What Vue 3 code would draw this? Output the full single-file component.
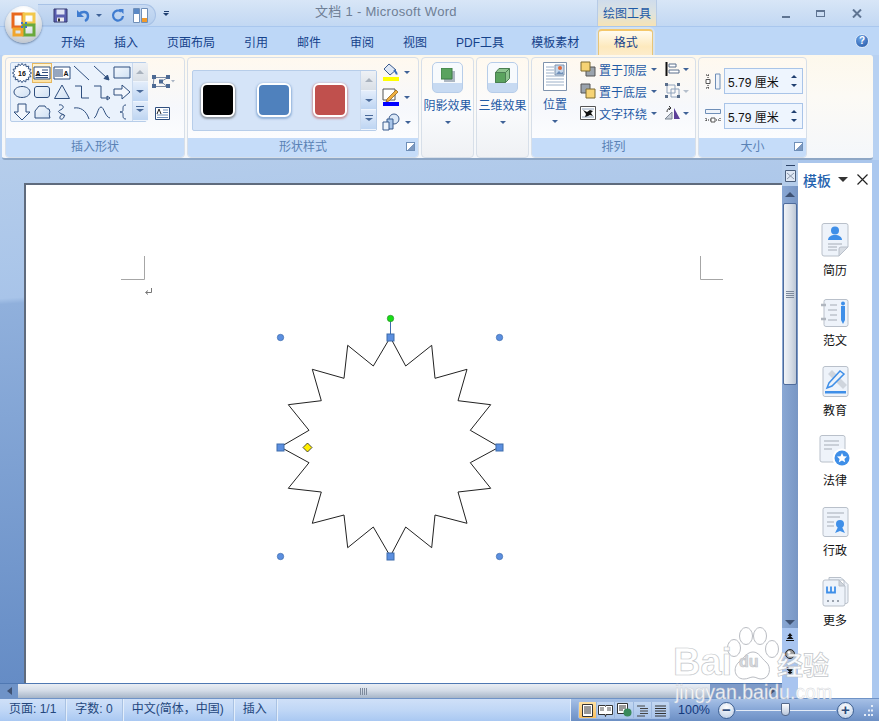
<script setup>
const tabs = ['开始', '插入', '页面布局', '引用', '邮件', '审阅', '视图', 'PDF工具', '模板素材']

// outline of the 16 point star, read off the reference in screen pixels
const starPoints = [
  [390.3, 337.3], [405.7, 366], [431.7, 345.3], [435, 378.3], [467, 369.3], [458, 400.7],
  [490.7, 404.7], [470.3, 430.3], [499.3, 447], [470.3, 462.7], [490.7, 488.3], [458, 492],
  [467, 523.3], [435, 515], [431.7, 547.7], [405.7, 527], [390.3, 556.3], [373.3, 527],
  [347.7, 547.7], [344, 515], [312.3, 523.3], [321.3, 492], [288.3, 488.3], [309, 462.7],
  [280.3, 447], [309, 430.3], [288.3, 404.7], [321.3, 400.7], [312.3, 369.3], [344, 378.3],
  [347.7, 345.3], [373.3, 366],
].map((p) => p.join(',')).join(' ')

const cornerHandles = [[280, 337], [499, 337], [280, 556], [499, 556]]
const sideHandles = [[390, 337], [280, 447], [499, 447], [390, 556]]

const burst = (() => {
  const pts = []
  for (let i = 0; i < 32; i++) {
    const r = i % 2 ? 7.6 : 9.6
    const a = (i * Math.PI) / 16
    pts.push(`${(10 + r * Math.sin(a)).toFixed(1)},${(10 - r * Math.cos(a)).toFixed(1)}`)
  }
  return 'M' + pts.join('L') + 'Z'
})()

const shapes = [
  { d: burst, fill: '#fff', label: '16' },
  { d: 'M2 4h16v12H2z M10 7h6 M10 9.5h6 M3.5 12.5h12.5 M3.5 14.5h12.5', fill: '#fff', label: 'A', active: true },
  { d: 'M2 4h16v12H2z M4 6v8 M6 6v8 M8 6v8 M10 6v8', fill: '#fff', label: 'A', labelX: 14 },
  { d: 'M2 3L17 17' },
  { d: 'M2 3L15 15 M17 17l-5-1.5 3.5-3.5z', fill: '#2f4f7f' },
  { d: 'M2 4h16v11H2z', fill: 'url(#shapeFill)' },
  { d: 'M10 4.5c4.5 0 8 2.5 8 5.5s-3.5 5.5-8 5.5S2 13 2 10s3.5-5.5 8-5.5z', fill: 'url(#shapeFill)' },
  { d: 'M5 4.5h10c1.5 0 2.5 1 2.5 2.5v6c0 1.5-1 2.5-2.5 2.5H5c-1.5 0-2.5-1-2.5-2.5V7c0-1.5 1-2.5 2.5-2.5z', fill: 'url(#shapeFill)' },
  { d: 'M10 3l7.5 13.5h-15z', fill: 'url(#shapeFill)' },
  { d: 'M3 4h6.5v12H17' },
  { d: 'M2 4h7v12h7 M18 16l-3-2v4z' },
  { d: 'M2 7h8V3l8 7-8 7v-4H2z', fill: '#f2f6fc' },
  { d: 'M6 2h8v8h4l-8 8-8-8h4z', fill: '#f2f6fc' },
  { d: 'M3 16V9l4-5h6c1 2 2 3 4 3l1 3c-1 1-1 3 0 6z', fill: 'url(#shapeFill)' },
  { d: 'M7 3c3-1 6 2 3 4S5 9 8 11s5 1 4 4-5 3-4 0 4-3 5-1' },
  { d: 'M2 6c6-1 12 2 15 11' },
  { d: 'M2 16c3-1 4-11 7-11s4 10 9 11' },
  { d: 'M14 3c-3 0-3 2-3 4s0 3-3 3c3 0 3 1 3 3s0 4 3 4' },
]
</script>

<template>
  <div class="word">
    <header class="titlebar">
      <div class="qat">
        <!-- save -->
        <svg class="qat-icon" width="15" height="15" viewBox="0 0 15 15">
          <path d="M1 1h13v13H1z" fill="#5a5fb0" stroke="#34386f" />
          <path d="M3.5 1.5h8v5h-8z" fill="#dfe4f5" />
          <path d="M4 9.5h7v4H4z" fill="#e9e9ee" />
          <path d="M5 10.5h2v3H5z" fill="#333" />
        </svg>
        <!-- undo -->
        <svg class="qat-icon undo" width="15" height="15" viewBox="0 0 15 15">
          <path d="M3 6c3-3 9-3 9 2 0 2-1 4-3 5" fill="none" stroke="#3f7cd0" stroke-width="2.4" />
          <path d="M1 2v7h7z" fill="#3f7cd0" />
        </svg>
        <span class="caret qat-caret"></span>
        <!-- repeat -->
        <svg class="qat-icon redo" width="14" height="15" viewBox="0 0 14 15">
          <path d="M10 3.5A5 5 0 1 0 12 8" fill="none" stroke="#3f7cd0" stroke-width="2.2" />
          <path d="M7.5 1l5 0v5z" fill="#3f7cd0" />
        </svg>
        <!-- page layout -->
        <svg class="qat-icon" width="15" height="15" viewBox="0 0 15 15">
          <path d="M.5.5h6v14h-6z" fill="#fff" stroke="#6f8fb8" />
          <path d="M1 1h5v5H1z" fill="#5a89c6" />
          <path d="M8.5.5h6v14h-6z" fill="#fff" stroke="#6f8fb8" />
          <path d="M9 10h5v4H9z" fill="#f09a2c" />
        </svg>
      </div>
      <div class="qat-more"><i></i><span class="caret"></span></div>
      <div class="doc-title">文档 1 - Microsoft Word</div>
      <div class="context-title">绘图工具</div>
      <div class="win-controls">
        <span class="win-min"></span>
        <span class="win-max"></span>
        <svg width="10" height="9" viewBox="0 0 10 9">
          <path d="M1 .5l8 8M9 .5l-8 8" stroke="#5f7492" stroke-width="2" />
        </svg>
      </div>
    </header>

    <nav class="tabs">
      <span v-for="tab in tabs" :key="tab" class="tab">{{ tab }}</span>
      <span class="tab-active">格式</span>
      <span class="help">?</span>
    </nav>

    <section class="ribbon">
      <div class="group g-insert">
        <div class="group-body insert-body">
          <svg class="svg-defs" width="0" height="0">
            <defs>
              <linearGradient id="shapeFill" x1="0" y1="0" x2="1" y2="1">
                <stop offset="0" stop-color="#f4f8fd" />
                <stop offset="1" stop-color="#cfe0f3" />
              </linearGradient>
            </defs>
          </svg>
          <div class="gallery shapes-gallery">
            <div class="shape-grid">
              <svg
                v-for="(shape, i) in shapes"
                :key="i"
                class="shape"
                :class="{ 'shape-active': shape.active }"
                width="20"
                height="20"
                viewBox="0 0 20 20"
              >
                <path :d="shape.d" :fill="shape.fill || 'none'" stroke="#2f4f7f" stroke-width="1" />
                <text
                  v-if="shape.label"
                  class="shape-label"
                  :x="shape.labelX || (shape.label === 'A' ? 6 : 10)"
                  y="13"
                  text-anchor="middle"
                >{{ shape.label }}</text>
              </svg>
            </div>
            <div class="gallery-scroll">
              <span class="scroll-btn disabled"><i class="up"></i></span>
              <span class="scroll-btn"><i class="down"></i></span>
              <span class="scroll-btn"><i class="more"></i></span>
            </div>
          </div>
          <div class="insert-side">
            <svg width="24" height="15" viewBox="0 0 24 15">
              <path d="M3 3.5h14l-7 4 6 5H2z" fill="none" stroke="#7d8ca5" />
              <path d="M1 1h4v4H1zM15 1h4v4h-4zM8 5.5h4v4H8zM1 10h4v4H1zM15 10h4v4h-4z" fill="#4d6a94" />
              <path d="M20 6h4l-2 2.5z" fill="#a9b4c4" />
            </svg>
            <svg width="15" height="13" viewBox="0 0 15 13">
              <path d="M.5.5h14v12H.5z" fill="#fff" stroke="#2f4f7f" />
              <path d="M8 3h5M8 5.5h5M2 8h11M2 10.5h11" stroke="#6f8fb8" />
              <path d="M2 7l2-5 2 5" fill="none" stroke="#222" />
            </svg>
          </div>
        </div>
        <div class="group-label">插入形状</div>
      </div>

      <div class="group g-style">
        <div class="group-body style-body">
          <div class="gallery style-gallery">
            <div class="swatches">
              <span class="swatch black"></span>
              <span class="swatch blue"></span>
              <span class="swatch red"></span>
            </div>
            <div class="gallery-scroll">
              <span class="scroll-btn disabled"><i class="up"></i></span>
              <span class="scroll-btn"><i class="down"></i></span>
              <span class="scroll-btn"><i class="more"></i></span>
            </div>
          </div>
          <div class="style-tools">
            <div class="style-tool">
              <svg width="17" height="18" viewBox="0 0 17 18">
                <path d="M7 1l7 6-6 5-6-6z" fill="#dfe8f5" stroke="#3b5c8e" />
                <path d="M12 7c2 2 3 3 2.5 4.5" fill="none" stroke="#3a6fc0" stroke-width="2" />
                <path d="M1 14h16v4H1z" fill="#ffff00" />
              </svg>
              <span class="caret"></span>
            </div>
            <div class="style-tool">
              <svg width="17" height="18" viewBox="0 0 17 18">
                <path d="M1 1h12v11H1z" fill="#fff" stroke="#555" />
                <path d="M5 11l9-9 2 2-9 9-3 1z" fill="#f0b040" stroke="#8a5a10" stroke-width=".7" />
                <path d="M1 14h16v4H1z" fill="#0000ff" />
              </svg>
              <span class="caret"></span>
            </div>
            <div class="style-tool">
              <svg width="18" height="18" viewBox="0 0 18 18">
                <circle cx="12" cy="6" r="5" fill="#dbe8f7" stroke="#3b5c8e" />
                <path d="M5 6h6v10H5z" fill="#a9c6ea" stroke="#3b5c8e" />
                <path d="M1 9h6v8H1z" fill="#eef4fb" stroke="#3b5c8e" />
              </svg>
              <span class="caret"></span>
            </div>
          </div>
        </div>
        <div class="group-label">
          形状样式
          <span class="launcher"></span>
        </div>
      </div>

      <div class="group g-effect">
        <div class="group-body effect-body">
          <span class="effect-btn">
            <svg width="14" height="14" viewBox="0 0 14 14">
              <path d="M3 3h11v11H3z" fill="#8d9aa8" opacity=".7" />
              <path d="M0 0h11v11H0z" fill="#5aa35e" stroke="#3c7a45" />
            </svg>
          </span>
          <span class="effect-text">阴影效果</span>
          <span class="caret"></span>
        </div>
      </div>

      <div class="group g-effect">
        <div class="group-body effect-body">
          <span class="effect-btn">
            <svg width="15" height="15" viewBox="0 0 15 15">
              <path d="M4 .5h10.5v10l-4 4H.5v-10z" fill="#8dc48f" stroke="#4a7f52" />
              <path d="M.5 4.5h10v10H.5z" fill="#5aa35e" stroke="#4a7f52" />
              <path d="M10.5 4.5l4-4" stroke="#4a7f52" />
            </svg>
          </span>
          <span class="effect-text">三维效果</span>
          <span class="caret"></span>
        </div>
      </div>

      <div class="group g-arrange">
        <div class="group-body arrange-body">
          <div class="position-btn">
            <svg width="24" height="29" viewBox="0 0 24 29">
              <path d="M.5.5h23v28H.5z" fill="#fff" stroke="#7f93ad" />
              <path d="M3 5h8M3 8h8M3 11h8M3 14h18M3 17h18M3 20h18M3 23h18" stroke="#9cb0c8" />
              <path d="M12 3h9v10h-9z" fill="#c6d8ec" stroke="#7f93ad" />
              <circle cx="17" cy="6" r="2" fill="#e2683a" />
              <path d="M13 12l3-3 2 2 2-1v2z" fill="#6f8fb8" />
            </svg>
            <span class="effect-text">位置</span>
            <span class="caret"></span>
          </div>
          <div class="arrange-rows">
            <div class="arrange-row">
              <svg width="16" height="16" viewBox="0 0 16 16">
                <path d="M6 6h9v9H6z" fill="#9aa3ad" stroke="#555" />
                <path d="M1 1h9v9H1z" fill="#f6d374" stroke="#7d6a30" />
              </svg>
              <span class="arrange-text">置于顶层</span>
              <span class="caret"></span>
            </div>
            <div class="arrange-row">
              <svg width="16" height="16" viewBox="0 0 16 16">
                <path d="M1 1h9v9H1z" fill="#9aa3ad" stroke="#555" />
                <path d="M6 6h9v9H6z" fill="#f6d374" stroke="#7d6a30" />
              </svg>
              <span class="arrange-text">置于底层</span>
              <span class="caret"></span>
            </div>
            <div class="arrange-row">
              <svg width="16" height="14" viewBox="0 0 16 14">
                <path d="M.5.5h15v13H.5z" fill="#fff" stroke="#555" />
                <path d="M2 3h12M2 11h12" stroke="#8fa2bb" />
                <path d="M3 4l4 2 3-2 3 1-2 2 2 3-3-1-2 1-3 1 1-3z" fill="#111" />
              </svg>
              <span class="arrange-text">文字环绕</span>
              <span class="caret"></span>
            </div>
          </div>
          <div class="arrange-tools">
            <div class="arrange-tool">
              <svg width="16" height="14" viewBox="0 0 16 14">
                <path d="M1.5 0v14" stroke="#111" stroke-width="2" />
                <path d="M4 2h7v3H4zM4 8h10v3H4z" fill="#fff" stroke="#5a6f8c" />
              </svg>
              <span class="caret"></span>
            </div>
            <div class="arrange-tool">
              <svg width="16" height="16" viewBox="0 0 16 16">
                <path d="M2 2h8v8H2zM6 6h8v8H6z" fill="none" stroke="#8fa2bb" />
                <path d="M0 0h3v3H0zM12 0h3v3h-3zM0 12h3v3H0zM12 12h3v3h-3z" fill="#5a6f8c" />
              </svg>
              <span class="caret muted"></span>
            </div>
            <div class="arrange-tool">
              <svg width="16" height="14" viewBox="0 0 16 14">
                <path d="M0 13l7-7v7z" fill="#c9cfd8" stroke="#7b8694" />
                <path d="M9 13V2l6 11z" fill="#5b3f98" />
                <path d="M2 6c0-2 1-4 4-4M4 0l2 2-2 2" fill="none" stroke="#333" />
              </svg>
              <span class="caret"></span>
            </div>
          </div>
        </div>
        <div class="group-label">排列</div>
      </div>

      <div class="group g-size">
        <div class="group-body size-body">
          <div class="size-row">
            <svg width="16" height="17" viewBox="0 0 16 17">
              <path d="M10.5 1h4.5v15h-4.5z" fill="#eef3fa" stroke="#6f8fb8" />
              <path d="M3 2v13M1 2h4M1 15h4" stroke="#222" stroke-dasharray="1 1" fill="none" />
              <path d="M1 6.5h4v4H1z" fill="#fff" stroke="#555" />
            </svg>
            <div class="size-input">
              <span>5.79 厘米</span>
              <span class="spinner"><i class="spin-up"></i><i class="spin-down"></i></span>
            </div>
          </div>
          <div class="size-row">
            <svg width="16" height="17" viewBox="0 0 16 17">
              <path d="M.5 1.5h15v4H.5z" fill="#eef3fa" stroke="#6f8fb8" />
              <path d="M1 12h14M1 10v4M15 10v4" stroke="#222" stroke-dasharray="1 1" fill="none" />
              <path d="M6 10h4v4H6z" fill="#fff" stroke="#555" />
            </svg>
            <div class="size-input">
              <span>5.79 厘米</span>
              <span class="spinner"><i class="spin-up"></i><i class="spin-down"></i></span>
            </div>
          </div>
        </div>
        <div class="group-label">
          大小
          <span class="launcher"></span>
        </div>
      </div>
    </section>

    <main class="workspace">
      <div class="doc-col">
        <div class="page-area">
          <div class="page">
            <svg class="page-canvas" width="756" height="498" viewBox="26 185 756 498">
              <path d="M144.5 256v23.5H121M700.5 256v23.5H723" fill="none" stroke="#a6a6a6" />
              <path d="M151.5 288v4.5H146M148 290.5l-2.5 2 2.5 2" fill="none" stroke="#777" />
              <polygon :points="starPoints" fill="#fff" stroke="#222" stroke-width="1" />
              <path d="M390.5 318v19" stroke="#3f6cab" />
              <circle cx="390.5" cy="318.5" r="3.2" fill="#16e016" stroke="#2c8a2c" stroke-width=".7" />
              <circle
                v-for="h in cornerHandles"
                :key="h.join()"
                :cx="h[0] + 0.5"
                :cy="h[1] + 0.5"
                r="3.2"
                fill="#5b8fe0"
                stroke="#3f6cab"
                stroke-width=".7"
              />
              <rect
                v-for="h in sideHandles"
                :key="h.join()"
                :x="h[0] - 3"
                :y="h[1] - 3"
                width="7"
                height="7"
                fill="#5b8fe0"
                stroke="#3f6cab"
                stroke-width="1"
              />
              <path d="M307.5 443l4.5 4.5-4.5 4.5-4.5-4.5z" fill="#ffee00" stroke="#222" stroke-width=".8" />
            </svg>
          </div>
        </div>
        <div class="hscroll">
          <span class="hscroll-left"><i></i></span>
          <span class="hscroll-thumb"><i></i></span>
          <span class="hscroll-right"><i></i></span>
        </div>
      </div>

      <div class="vscroll">
        <div class="vscroll-head">
          <i class="split-bar"></i>
          <svg width="11" height="12" viewBox="0 0 11 12">
            <path d="M.5.5h10v11H.5z" fill="#dfe8f5" stroke="#4b5f7c" />
            <path d="M2 3l7 6M9 3l-7 6" stroke="#8a97aa" />
          </svg>
        </div>
        <div class="vscroll-track">
          <i class="v-arrow-up"></i>
          <div class="vscroll-thumb"><i></i></div>
          <i class="v-arrow-down"></i>
        </div>
        <div class="browse">
          <svg width="8" height="8" viewBox="0 0 8 8"><path d="M4 0l2.5 3h-5zM4 2.5L7.5 6h-7zM0 7h8v1H0z" fill="#111" /></svg>
          <svg width="10" height="10" viewBox="0 0 10 10">
            <circle cx="5" cy="5" r="4.5" fill="#9a9a9a" stroke="#222" />
            <circle cx="4" cy="3.5" r="1.5" fill="#fff" />
          </svg>
          <svg width="8" height="8" viewBox="0 0 8 8"><path d="M0 0h8v1H0zM.5 2h7L4 5.5zM1.5 5h5L4 8z" fill="#111" /></svg>
        </div>
      </div>

      <aside class="side">
        <div class="side-head">
          <span class="side-title">模板</span>
          <i class="side-caret"></i>
          <svg width="11" height="11" viewBox="0 0 11 11"><path d="M.5.5l10 10M10.5.5l-10 10" stroke="#222" stroke-width="1.2" /></svg>
        </div>
        <div class="side-list">
          <div class="side-item">
            <svg width="28" height="34" viewBox="0 0 28 34">
              <path d="M3 .5h22a2 2 0 0 1 2 2V24l-9 9H3a2 2 0 0 1-2-2V2.5a2 2 0 0 1 2-2z" fill="#eef3fa" stroke="#b9c0ca" />
              <path d="M27 24h-7a2 2 0 0 0-2 2v7z" fill="#d8dde4" stroke="#b9c0ca" />
              <circle cx="14" cy="7.5" r="4" fill="#3f8fe8" />
              <path d="M7 17c0-3 3-5 7-5s7 2 7 5z" fill="#3f8fe8" />
              <path d="M7 21h14M7 24h9M7 27h9" stroke="#a5acb6" />
            </svg>
            <span>简历</span>
          </div>
          <div class="side-item">
            <svg width="28" height="28" viewBox="0 0 28 28">
              <path d="M5 .5h20a2 2 0 0 1 2 2v23a2 2 0 0 1-2 2H5a2 2 0 0 1-2-2v-23a2 2 0 0 1 2-2z" fill="#eef3fa" stroke="#b9c0ca" />
              <path d="M0 6h5M0 20h5" stroke="#b0b6bf" stroke-width="2.4" />
              <path d="M9 6h7M7 11h9M9 16h7M7 21h9" stroke="#a5acb6" />
              <path d="M20 7h4v14l-2 4-2-4z" fill="#3f8fe8" />
              <circle cx="22" cy="4.5" r="2" fill="#3f8fe8" />
            </svg>
            <span>范文</span>
          </div>
          <div class="side-item">
            <svg width="27" height="31" viewBox="0 0 27 31">
              <path d="M3 .5h21a2 2 0 0 1 2 2v26a2 2 0 0 1-2 2H3a2 2 0 0 1-2-2v-26a2 2 0 0 1 2-2z" fill="#eef3fa" stroke="#b9c0ca" />
              <path d="M6 8l4-4 15 15-4 4z" fill="#cfd5dd" />
              <path d="M5 22l2-5L18 5l4 3L10 20z" fill="#eef3fa" stroke="#3f8fe8" stroke-width="1.5" />
              <path d="M3 25h21v2.5H3z" fill="#3f8fe8" />
            </svg>
            <span>教育</span>
          </div>
          <div class="side-item">
            <svg width="32" height="32" viewBox="0 0 32 32">
              <path d="M3 .5h21a2 2 0 0 1 2 2V27H3a2 2 0 0 1-2-2V2.5a2 2 0 0 1 2-2z" fill="#eef3fa" stroke="#b9c0ca" />
              <path d="M5 6h15M5 10h15M5 14h8" stroke="#a5acb6" />
              <circle cx="23" cy="23" r="9.5" fill="#fff" />
              <circle cx="23" cy="23" r="7.5" fill="#3f8fe8" />
              <path d="M23 18l1.5 3.2 3.5.4-2.6 2.3.8 3.4-3.2-1.8-3.2 1.8.8-3.4-2.6-2.3 3.5-.4z" fill="#fff" />
            </svg>
            <span>法律</span>
          </div>
          <div class="side-item">
            <svg width="27" height="30" viewBox="0 0 27 30">
              <path d="M3 .5h21a2 2 0 0 1 2 2v25a2 2 0 0 1-2 2H3a2 2 0 0 1-2-2v-25a2 2 0 0 1 2-2z" fill="#eef3fa" stroke="#b9c0ca" />
              <path d="M5 6h17M5 10h13M5 15h7M5 19h7" stroke="#a5acb6" />
              <circle cx="18" cy="17" r="4" fill="#3f8fe8" />
              <path d="M16 20l-3 6 5-2 5 2-3-6z" fill="#3f8fe8" />
            </svg>
            <span>行政</span>
          </div>
          <div class="side-item">
            <svg width="27" height="30" viewBox="0 0 27 30">
              <path d="M7 .5h12l7 7v17a2 2 0 0 1-2 2h-2V3H7z" fill="#eef3fa" stroke="#b9c0ca" />
              <path d="M3 3h14l6 6v18a2 2 0 0 1-2 2H3a2 2 0 0 1-2-2V5a2 2 0 0 1 2-2z" fill="#eef3fa" stroke="#b9c0ca" />
              <path d="M17 3v6h6z" fill="#d0d5dc" stroke="#b9c0ca" />
              <path d="M5 9.5v6h8v-6M9 9.5v6" fill="none" stroke="#3f8fe8" stroke-width="1.8" />
              <path d="M5 23h2v2H5zM10 23h2v2h-2zM15 23h2v2h-2z" fill="#9aa2ad" />
            </svg>
            <span>更多</span>
          </div>
        </div>
      </aside>
      <div class="right-edge"></div>
    </main>

    <footer class="status">
      <div class="status-left">
        <span class="status-cell">页面: 1/1</span>
        <span class="status-cell">字数: 0</span>
        <span class="status-cell">中文(简体，中国)</span>
        <span class="status-cell">插入</span>
      </div>
      <div class="status-right">
        <div class="views">
          <span class="view view-active">
            <svg width="13" height="13" viewBox="0 0 13 13"><path d="M1.5.5h10v12h-10z" fill="#fff" stroke="#333" /><path d="M3 3h7M3 5h7M3 7h7M3 9h7" stroke="#333" /></svg>
          </span>
          <span class="view">
            <svg width="15" height="13" viewBox="0 0 15 13"><path d="M.5 1.5h6.5l.5 1 .5-1h6.500v9H8l-.5 2-.5-2H.5z" fill="#fff" stroke="#333" /><path d="M2 4h4M2 6h4M9 4h4M9 6h4" stroke="#555" /></svg>
          </span>
          <span class="view">
            <svg width="15" height="14" viewBox="0 0 15 14"><path d="M.5.5h10v10H.5z" fill="#fff" stroke="#333" /><path d="M2 3h7M2 5h7M2 7h4" stroke="#333" /><circle cx="10.5" cy="9.5" r="4" fill="#3a8a5c" /></svg>
          </span>
          <span class="view">
            <svg width="13" height="13" viewBox="0 0 13 13"><path d="M1 2h8M4 4.5h8M4 7h8M4 9.5h8M1 12h8" stroke="#444" /></svg>
          </span>
          <span class="view">
            <svg width="13" height="13" viewBox="0 0 13 13"><path d="M1 2h11M1 4.5h11M1 7h11M1 9.5h11M1 12h11" stroke="#333" /></svg>
          </span>
        </div>
        <span class="zoom-value">100%</span>
        <span class="zoom-btn">−</span>
        <div class="zoom-track"><i class="zoom-thumb"></i></div>
        <span class="zoom-btn">+</span>
        <svg class="grip" width="10" height="11" viewBox="0 0 10 11">
          <path d="M7 0h2v2H7zM4 4.5h2v2H4zM7 4.5h2v2H7zM0 9h2v2H0zM4 9h2v2H4zM7 9h2v2H7z" fill="#e4ecf7" />
        </svg>
      </div>
    </footer>

    <!-- office orb sits over the title and tab rows -->
    <div class="orb">
      <svg width="26" height="26" viewBox="0 0 26 26">
        <path d="M2 2h10v13H2z" fill="none" stroke="#e8681e" stroke-width="3" />
        <path d="M13 2h10v9H13z" fill="none" stroke="#f2c84b" stroke-width="3" />
        <path d="M13 13h10v10H13z" fill="none" stroke="#69a93c" stroke-width="3" />
        <path d="M3 17h8v6H3z" fill="none" stroke="#f0a52c" stroke-width="3" />
        <path d="M10 10h2v2h-2zM14 10h2v2h-2zM10 14h2v2h-2zM14 14h2v2h-2z" fill="#3f76c4" />
      </svg>
    </div>

    <!-- watermark over the bottom right corner -->
    <div class="watermark">
      <svg class="paw" width="60" height="60" viewBox="0 0 60 60">
        <g fill="rgba(255,255,255,.55)" stroke="#b9bcc2">
          <ellipse cx="12" cy="21" rx="6.5" ry="8.5" />
          <ellipse cx="24" cy="9" rx="6.5" ry="8.5" />
          <ellipse cx="38" cy="9" rx="6.5" ry="8.5" />
          <ellipse cx="50" cy="22" rx="6.5" ry="8.5" />
          <path d="M31 25c6 0 8 6 13 10 6 5 4 17-5 17-3 0-5-2-8-2s-5 2-9 2c-9 0-12-11-5-17 5-4 8-10 14-10z" />
        </g>
      </svg>
      <span class="wm-bai">Bai</span>
      <span class="wm-du">du</span>
      <span class="wm-jy">经验</span>
      <span class="wm-url">jingyan.baidu.com</span>
    </div>
  </div>
</template>

<style>
html,
body {
  margin: 0;
  overflow: hidden;
}
</style>

<style scoped>
.word {
  position: relative;
  width: 879px;
  height: 721px;
  display: flex;
  flex-direction: column;
  overflow: hidden;
  background: #b7d1f2;
  font-family: 'Liberation Sans', 'Noto Sans CJK SC', sans-serif;
  font-size: 12px;
  color: #15428b;
}

/* title bar */
.titlebar {
  height: 27px;
  display: flex;
  align-items: stretch;
  background: linear-gradient(#d8e6f7, #cfe0f5 40%, #c2d8f3);
  border-bottom: 1px solid #a9c7ee;
  box-sizing: border-box;
}

.qat {
  width: 118px;
  height: 22px;
  margin: 4px 0 0 38px;
  padding-left: 15px;
  box-sizing: border-box;
  display: flex;
  align-items: center;
  gap: 6px;
  background: linear-gradient(#c9dbf3, #b6cfee);
  border: 1px solid #a8c2e6;
  border-left: 0;
  border-radius: 0 11px 11px 0;
}

.undo {
  margin-left: 2px;
}

.qat-caret {
  margin: 0 0 0 -1px;
}

.redo {
  margin-left: 3px;
  margin-right: 2px;
}

.qat-more {
  width: 10px;
  margin: 11px 0 0 5px;
  display: flex;
  flex-direction: column;
  align-items: center;
  gap: 1px;
}

.qat-more i {
  width: 5px;
  height: 1px;
  background: #1f3f70;
}

.qat-more .caret {
  border-top-color: #1f3f70;
}

.doc-title {
  width: 282px;
  margin-left: 144px;
  padding-top: 1px;
  font-size: 13px;
  color: #6f7f96;
  letter-spacing: 0.3px;
  white-space: nowrap;
}

.context-title {
  width: 60px;
  text-align: center;
  padding-top: 4px;
  box-sizing: border-box;
  background: linear-gradient(#cfdcec, #dde3e0 50%, #f7e3b4);
  border-left: 1px solid #b7cbe6;
  border-right: 1px solid #b7cbe6;
  color: #1f5aa5;
}

.win-controls {
  flex: 1;
  display: flex;
  align-items: center;
  gap: 28px;
  padding: 0 0 0 125px;
}

.win-min {
  width: 8px;
  height: 2px;
  margin-top: 7px;
  background: #5f7492;
}

.win-max {
  width: 9px;
  height: 7px;
  box-sizing: border-box;
  border: 1px solid #5f7492;
  border-top-width: 2px;
  margin-left: -2px;
  margin-right: -1px;
}

/* tabs */
.tabs {
  height: 28px;
  display: flex;
  align-items: center;
  padding-left: 61px;
  background: #bdd7f7;
  box-sizing: border-box;
}

.tab {
  margin-right: 29px;
  white-space: nowrap;
}

.tab:nth-child(8) {
  margin-right: 27px;
}

.tab-active {
  align-self: flex-end;
  width: 55px;
  height: 26px;
  margin-left: -10px;
  line-height: 25px;
  text-align: center;
  box-sizing: border-box;
  border: 1px solid #e8c578;
  border-bottom: 0;
  border-top: 2px solid #f4c76a;
  border-radius: 4px 4px 0 0;
  background: linear-gradient(#fffbf0, #fde9bd 65%, #fdeccb);
  box-shadow: 0 0 0 2px #d5e2ef;
}

.help {
  width: 14px;
  height: 14px;
  margin-left: auto;
  margin-right: 10px;
  border-radius: 50%;
  background: radial-gradient(circle at 40% 30%, #6ea6ea, #1c4f9f);
  border: 1px solid #dbe8f8;
  box-sizing: border-box;
  color: #fff;
  font-size: 10px;
  font-weight: 700;
  line-height: 12px;
  text-align: center;
}

/* ribbon */
.ribbon {
  height: 105px;
  margin: 0 6px 0 2px;
  padding: 2px 3px 0;
  box-sizing: border-box;
  display: flex;
  gap: 2px;
  border-radius: 3px;
  background: linear-gradient(#fdf8ec, #fcfaf5 40%, #f4f7fb);
  border-bottom: 2px solid #8ea7c6;
}

.group {
  display: flex;
  flex-direction: column;
  box-sizing: border-box;
  border: 1px solid #d7dfe9;
  border-radius: 4px;
  background: linear-gradient(#fff9ef, #f6f8fc 50%, #fff);
  overflow: hidden;
}

.g-insert {
  width: 180px;
}

.g-style {
  width: 232px;
}

.g-effect {
  width: 53px;
  background: linear-gradient(#fff9ef, #fafbfd 50%, #eff1f4);
}

.g-arrange {
  width: 165px;
}

.g-size {
  width: 109px;
}

.group-body {
  flex: 1;
  min-height: 0;
}

.group-label {
  position: relative;
  height: 19px;
  line-height: 19px;
  text-align: center;
  background: #c5dcf9;
  color: #5a82b5;
}

.launcher {
  position: absolute;
  right: 3px;
  top: 4px;
  width: 7px;
  height: 7px;
  border: 1px solid #6f8fb8;
  background: linear-gradient(135deg, #fff 50%, #7d99c0 50%);
}

.caret {
  display: inline-block;
  width: 0;
  height: 0;
  border-left: 3px solid transparent;
  border-right: 3px solid transparent;
  border-top: 3px solid #3f6297;
}

.caret.muted {
  border-top-color: #b5bfcc;
}

/* galleries */
.gallery {
  display: flex;
  box-sizing: border-box;
  border: 1px solid #b7cde9;
  border-radius: 2px;
}

.gallery-scroll {
  width: 15px;
  flex: none;
  display: flex;
  flex-direction: column;
  border-left: 1px solid #c9d9ee;
}

.scroll-btn {
  flex: 1;
  display: flex;
  align-items: center;
  justify-content: center;
  background: linear-gradient(#e3edfb, #bed5f2);
  border-bottom: 1px solid #eef4fc;
}

.scroll-btn.disabled {
  background: linear-gradient(#eef1f5, #d9dfe6);
}

.scroll-btn i {
  display: block;
  width: 0;
  height: 0;
  border-left: 4px solid transparent;
  border-right: 4px solid transparent;
}

.scroll-btn .up {
  border-bottom: 4px solid #a9b2bd;
}

.scroll-btn .down {
  border-top: 3px solid #4a6a9a;
}

.scroll-btn .more {
  position: relative;
  border-top: 3px solid #4a6a9a;
}

.scroll-btn .more::before {
  content: '';
  position: absolute;
  left: -4px;
  top: -6px;
  width: 8px;
  height: 1px;
  background: #4a6a9a;
}

.svg-defs {
  position: absolute;
}

.insert-body {
  display: flex;
  padding: 4px 0 0 4px;
}

.shapes-gallery {
  width: 137px;
  height: 60px;
  background: #eaf2fc;
}

.shape-grid {
  flex: 1;
  display: grid;
  grid-template-columns: repeat(6, 20px);
  grid-auto-rows: 19.3px;
  padding-left: 0.5px;
}

.shape {
  display: block;
}

.shape-active {
  background: linear-gradient(#fff6d9, #fde1a0);
  outline: 1px solid #e6b860;
  outline-offset: -1px;
}

.shape-label {
  font-size: 7px;
  font-weight: 700;
  fill: #111;
}

.insert-side {
  flex: 1;
  display: flex;
  flex-direction: column;
  align-items: center;
  gap: 18px;
  padding: 12px 6px 0 0;
}

.style-body {
  display: flex;
  padding: 12px 0 0 4px;
}

.style-gallery {
  width: 185px;
  height: 61px;
  background: #d5e4f8;
}

.swatches {
  flex: 1;
  display: flex;
  gap: 22px;
  padding: 12px 0 0 8px;
}

.swatch {
  width: 34px;
  height: 34px;
  box-sizing: border-box;
  border-radius: 6px;
  border: 2px solid #fff;
  box-shadow: 0 1px 2px 1px rgba(60, 60, 60, 0.45);
}

.swatch.black {
  background: #000;
}

.swatch.blue {
  background: #4f81bd;
  box-shadow: 0 1px 2px 1px rgba(79, 129, 189, 0.5);
}

.swatch.red {
  background: #c0504d;
  box-shadow: 0 1px 2px 1px rgba(192, 80, 77, 0.5);
}

.style-tools {
  display: flex;
  flex-direction: column;
  gap: 7px;
  margin: -7px 0 0 5px;
}

.style-tool {
  height: 18px;
  display: flex;
  align-items: center;
  gap: 5px;
}

/* effect groups */
.effect-body {
  display: flex;
  flex-direction: column;
  align-items: center;
  padding-top: 4px;
}

.effect-btn {
  width: 31px;
  height: 31px;
  flex: none;
  box-sizing: border-box;
  padding-top: 5px;
  display: flex;
  justify-content: center;
  border: 1px solid #b7cde9;
  border-radius: 5px;
  background: linear-gradient(#f7fafd 0, #f7fafd 70%, #c7daf2 70%);
}

.effect-text {
  margin-top: 5px;
  line-height: 17px;
  white-space: nowrap;
  color: #1f5aa5;
}

.effect-body .caret,
.position-btn .caret {
  margin-top: 6px;
}

/* arrange */
.arrange-body {
  display: flex;
  padding: 4px 0 0 10px;
}

.position-btn {
  width: 26px;
  display: flex;
  flex-direction: column;
  align-items: center;
  flex: none;
}

.position-btn .effect-text {
  margin-top: 6px;
}

.arrange-rows {
  margin: -4px 0 0 12px;
  width: 85px;
  display: flex;
  flex-direction: column;
}

.arrange-row {
  height: 22px;
  display: flex;
  align-items: center;
  gap: 3px;
}

.arrange-text {
  color: #1f5aa5;
  white-space: nowrap;
  margin-right: 1px;
}

.arrange-tools {
  display: flex;
  flex-direction: column;
  margin-top: -4px;
}

.arrange-tool {
  height: 22px;
  display: flex;
  align-items: center;
  gap: 2px;
}

/* size */
.size-body {
  display: flex;
  flex-direction: column;
  gap: 9px;
  padding: 10px 0 0 6px;
}

.size-row {
  display: flex;
  align-items: center;
  gap: 3px;
}

.size-input {
  width: 79px;
  height: 26px;
  box-sizing: border-box;
  display: flex;
  align-items: center;
  justify-content: space-between;
  padding: 0 5px 0 3px;
  border: 1px solid #a9c4e8;
  background: #eef5fe;
  color: #111;
  font-size: 12px;
  white-space: nowrap;
}

.spinner {
  display: flex;
  flex-direction: column;
  gap: 6px;
}

.spin-up,
.spin-down {
  display: block;
  width: 0;
  height: 0;
  border-left: 3px solid transparent;
  border-right: 3px solid transparent;
}

.spin-up {
  border-bottom: 3px solid #1f3f70;
}

.spin-down {
  border-top: 3px solid #1f3f70;
}

/* document */
.workspace {
  flex: 1;
  min-height: 0;
  display: flex;
  background: #aac6ec;
}

.doc-col {
  width: 782px;
  flex: none;
  display: flex;
  flex-direction: column;
}

.page-area {
  flex: 1;
  min-height: 0;
  padding: 23px 0 0 24px;
  overflow: hidden;
  background: linear-gradient(176deg, #b5cdeb, #a8c4e9 24%, #90b0dc 25%, #5f87c2);
}

.page {
  height: 100%;
  background: #fff;
  border-top: 2px solid #5f6b7d;
  border-left: 2px solid #5f6b7d;
}

.page-canvas {
  display: block;
}

.hscroll {
  height: 15px;
  flex: none;
  display: flex;
  box-sizing: border-box;
  border-top: 1px solid #4f78b2;
  background: #7f9bc8;
}

.hscroll-left {
  width: 18px;
  display: flex;
  align-items: center;
  justify-content: center;
  background: #6f93c7;
}

.hscroll-left i {
  width: 0;
  height: 0;
  border-top: 4px solid transparent;
  border-bottom: 4px solid transparent;
  border-right: 5px solid #3f5273;
}

.hscroll-thumb {
  width: 692px;
  box-sizing: border-box;
  padding-left: 342px;
  display: flex;
  align-items: center;
  background: linear-gradient(#eaeef4, #d5dde8 45%, #a6b5c8);
}

.hscroll-thumb i {
  width: 7px;
  height: 7px;
  background: repeating-linear-gradient(90deg, #7d8a9c 0, #7d8a9c 1px, transparent 1px, transparent 2px);
}

.hscroll-right {
  flex: 1;
  display: flex;
  align-items: center;
  justify-content: flex-end;
  padding-right: 7px;
}

.hscroll-right i {
  width: 0;
  height: 0;
  border-top: 4px solid transparent;
  border-bottom: 4px solid transparent;
  border-left: 5px solid #3f5273;
}

/* vertical scrollbar */
.vscroll {
  width: 16px;
  flex: none;
  display: flex;
  flex-direction: column;
  align-items: stretch;
}

.vscroll-head {
  height: 26px;
  flex: none;
  display: flex;
  flex-direction: column;
  align-items: center;
  padding-top: 5px;
  box-sizing: border-box;
  gap: 4px;
  background: #b5cdeb;
}

.split-bar {
  width: 9px;
  height: 1px;
  background: #2d4468;
}

.vscroll-track {
  height: 442px;
  flex: none;
  display: flex;
  flex-direction: column;
  align-items: center;
  background: linear-gradient(90deg, #8aa8d4, #7896c4);
}

.v-arrow-up {
  width: 0;
  height: 0;
  margin-top: 6px;
  border-left: 5px solid transparent;
  border-right: 5px solid transparent;
  border-bottom: 5px solid #3f5273;
}

.vscroll-thumb {
  width: 14px;
  height: 182px;
  margin-top: 6px;
  box-sizing: border-box;
  display: flex;
  align-items: center;
  justify-content: center;
  border: 1px solid #4f6c9c;
  border-radius: 2px;
  background: linear-gradient(90deg, #f0f3f7, #d5dce6 60%, #bcc7d6);
}

.vscroll-thumb i {
  width: 8px;
  height: 7px;
  background: repeating-linear-gradient(#7d8a9c 0, #7d8a9c 1px, transparent 1px, transparent 2px);
}

.v-arrow-down {
  width: 0;
  height: 0;
  margin-top: auto;
  margin-bottom: 3px;
  border-left: 5px solid transparent;
  border-right: 5px solid transparent;
  border-top: 5px solid #3f5273;
}

.browse {
  flex: 1;
  display: flex;
  flex-direction: column;
  align-items: center;
  gap: 8px;
  padding-top: 5px;
  background: #a9c5f0;
}

/* template panel */
.side {
  width: 74px;
  flex: none;
  margin-top: 3px;
  background: #fff;
  display: flex;
  flex-direction: column;
}

.side-head {
  display: flex;
  align-items: center;
  padding: 6px 0 0 5px;
  height: 21px;
  box-sizing: content-box;
}

.side-title {
  font-size: 14px;
  color: #2462ae;
  font-weight: 500;
}

.side-caret {
  width: 0;
  height: 0;
  margin: 0 9px 0 7px;
  border-left: 5px solid transparent;
  border-right: 5px solid transparent;
  border-top: 5px solid #333;
}

.side-list {
  display: flex;
  flex-direction: column;
  padding-top: 31px;
}

.side-item {
  height: 70px;
  box-sizing: border-box;
  display: flex;
  flex-direction: column;
  align-items: center;
  justify-content: flex-end;
  gap: 6px;
  padding-bottom: 11px;
  color: #111;
}

.side-item span {
  line-height: 17px;
}

.right-edge {
  flex: 1;
  background: #abc8ef;
}

/* status bar */
.status {
  height: 23px;
  flex: none;
  display: flex;
  box-sizing: border-box;
  border-top: 1px solid #6f93c7;
}

.status-left {
  width: 570px;
  flex: none;
  display: flex;
  background: linear-gradient(#cfe0f8, #c0d7f6 50%, #a9c8f2);
}

.status-cell {
  padding: 0 9px;
  line-height: 21px;
  color: #24477d;
  border-right: 1px solid #a9c2e3;
  box-shadow: 1px 0 0 #e3eefb;
  white-space: nowrap;
}

.status-right {
  flex: 1;
  display: flex;
  align-items: center;
  padding-left: 7px;
  border-left: 1px solid #e3eefb;
  background: linear-gradient(#a6c0e6, #86a6d6 50%, #6c8fc4);
}

.views {
  width: 92px;
  height: 18px;
  display: flex;
  flex: none;
  box-sizing: border-box;
  border: 1px solid #a3bde3;
  border-radius: 2px;
  overflow: hidden;
  background: linear-gradient(#c3d7f2, #a9c4ea);
}

.view {
  flex: 1;
  display: flex;
  align-items: center;
  justify-content: center;
  border-right: 1px solid #9cb7dd;
}

.view:last-child {
  border-right: 0;
}

.view-active {
  background: linear-gradient(#fde2a5, #fbc05e);
}

.zoom-value {
  margin-left: 8px;
  width: 31px;
  font-size: 12.5px;
  line-height: 14px;
  color: #12387c;
}

.zoom-btn {
  width: 17px;
  height: 17px;
  margin-left: 9px;
  flex: none;
  box-sizing: border-box;
  border: 1px solid #3c5f92;
  border-radius: 50%;
  background: radial-gradient(circle at 50% 30%, #fff, #b5c8e2);
  color: #2d4a78;
  font-size: 15px;
  font-weight: 700;
  line-height: 14px;
  text-align: center;
}

.zoom-track {
  position: relative;
  width: 100px;
  height: 1px;
  margin-left: 1px;
  background: #e4ecf7;
}

.zoom-track + .zoom-btn {
  margin-left: 1px;
}

.zoom-thumb {
  position: absolute;
  left: 45px;
  top: -7px;
  width: 9px;
  height: 13px;
  box-sizing: border-box;
  border: 1px solid #54688a;
  border-radius: 1px 1px 4px 4px;
  background: linear-gradient(#fdfdfe, #b9c7dc);
}

.grip {
  margin-left: 10px;
  flex: none;
}

/* overlays */
.orb {
  position: absolute;
  left: 5px;
  top: 6px;
  width: 37px;
  height: 37px;
  display: flex;
  align-items: center;
  justify-content: center;
  border-radius: 50%;
  background: radial-gradient(circle at 50% 25%, #fff 20%, #d8dde3 60%, #aeb6c0);
  box-shadow: 0 1px 2px rgba(40, 60, 90, 0.55);
}

.watermark {
  position: absolute;
  left: 675px;
  top: 625px;
  width: 160px;
  height: 75px;
  pointer-events: none;
  color: #fff;
  font-family: 'Liberation Sans', 'Noto Sans CJK SC', sans-serif;
  -webkit-text-stroke: 0.7px #bcbfc5;
}

.watermark span {
  position: absolute;
  white-space: nowrap;
  opacity: 0.9;
}

.paw {
  position: absolute;
  left: 47px;
  top: 2px;
}

.wm-bai {
  left: -2px;
  top: 16px;
  font-size: 38px;
  font-weight: 700;
}

.wm-du {
  left: 64px;
  top: 28px;
  font-size: 16px;
  font-weight: 700;
  color: #d5d7da;
}

.wm-jy {
  left: 102px;
  top: 20px;
  font-size: 26px;
  font-weight: 700;
}

.wm-url {
  left: 0;
  top: 60px;
  font-size: 19.5px;
  line-height: 15px;
  -webkit-text-stroke: 0.4px #c9ccd2;
}
</style>
